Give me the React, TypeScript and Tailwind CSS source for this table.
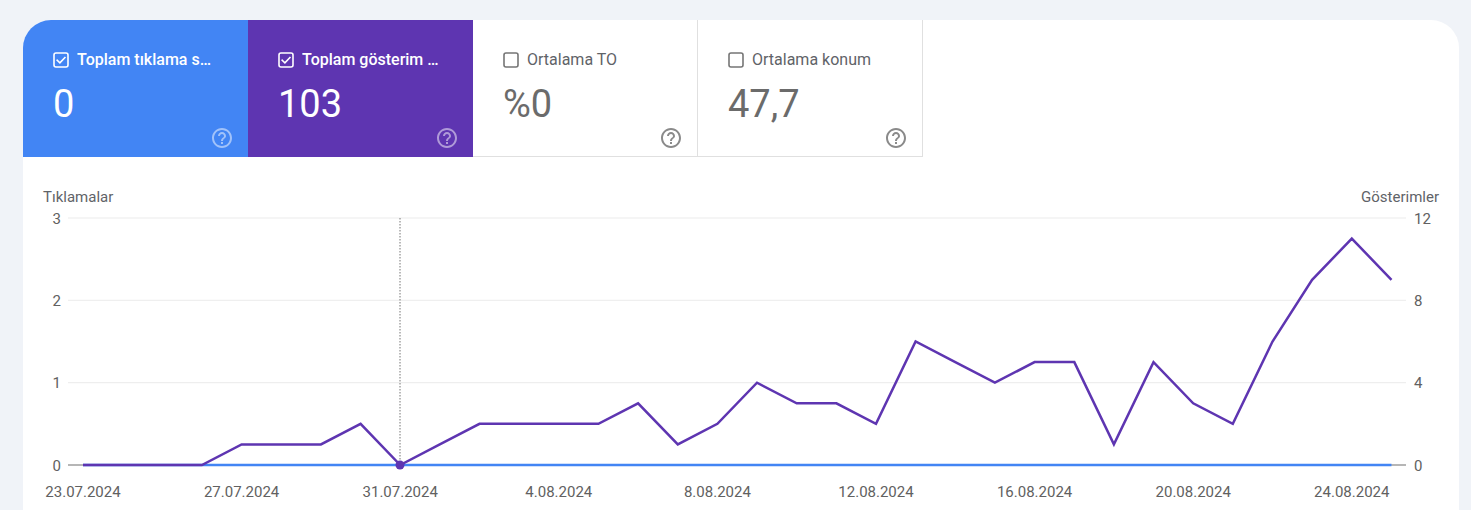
import React from "react";

const BLUE = "#4285f4";
const PURPLE = "#5e35b1";

function CheckIcon({ checked, color }: { checked: boolean; color: string }) {
  return (
    <svg width="16" height="16" viewBox="0 0 16 16" className="shrink-0">
      <rect x="1" y="1" width="14" height="14" rx="2" fill="none" stroke={color} strokeWidth="1.6" />
      {checked && (
        <path d="M4.2 8.2 L6.9 10.9 L11.9 5.6" fill="none" stroke={color} strokeWidth="1.6" strokeLinecap="square" />
      )}
    </svg>
  );
}

function HelpIcon({ color }: { color: string }) {
  return (
    <svg width="24" height="24" viewBox="0 0 24 24">
      <path
        fill={color}
        d="M11 18h2v-2h-2v2zm1-16C6.48 2 2 6.48 2 12s4.48 10 10 10 10-4.48 10-10S17.52 2 12 2zm0 18c-4.41 0-8-3.59-8-8s3.59-8 8-8 8 3.59 8 8-3.59 8-8 8zm0-14c-2.21 0-4 1.790-4 4h2c0-1.1.9-2 2-2s2 .9 2 2c0 2-3 1.75-3 5h2c0-2.25 3-2.5 3-5 0-2.21-1.79-4-4-4z"
      />
    </svg>
  );
}

type CardProps = {
  label: string;
  value: string;
  selected: boolean;
  bg?: string;
};

function MetricCard({ label, value, selected, bg }: CardProps) {
  if (selected) {
    return (
      <div
        className={
          "w-[225px] h-[137px] flex flex-col pt-[30px] pl-[30px] pr-[14px] pb-[13px] text-white " +
          (bg === "blue" ? "bg-[#4285f4]" : "bg-[#5e35b1]")
        }
      >
        <div className="flex items-center gap-[8px] h-[20px] pr-[20px] min-w-0">
          <CheckIcon checked color="#ffffff" />
          <span className="text-[16px] font-medium leading-[20px] truncate min-w-0">{label}</span>
        </div>
        <div className="mt-[12px] text-[38px] leading-[44px]">{value}</div>
        <div className="mt-auto self-end">
          <HelpIcon color="rgba(255,255,255,0.5)" />
        </div>
      </div>
    );
  }
  return (
    <div className="w-[225px] h-[137px] flex flex-col pt-[30px] pl-[30px] pr-[14px] pb-[12px] border-r border-b border-[#e0e0e0] text-[#5f6368]">
      <div className="flex items-center gap-[8px] h-[20px] pr-[20px] min-w-0">
        <CheckIcon checked={false} color="#757575" />
        <span className="text-[16px] leading-[20px] truncate min-w-0">{label}</span>
      </div>
      <div className="mt-[12px] text-[38px] leading-[44px] text-[#6b6b6b]">{value}</div>
      <div className="mt-auto self-end">
        <HelpIcon color="#8a8a8a" />
      </div>
    </div>
  );
}

const impressions = [
  0, 0, 0, 0, 1, 1, 1, 2, 0, 1, 2, 2, 2, 2, 3, 1, 2, 4, 3, 3, 2, 6, 5, 4, 5, 5, 1, 5, 3, 2, 6, 9, 11, 9,
];

const X0 = 83;
const DX = 39.65;
const Y0 = 465;
const unitImp = (465 - 218) / 12;

const dates = [
  "23.07.2024",
  "27.07.2024",
  "31.07.2024",
  "4.08.2024",
  "8.08.2024",
  "12.08.2024",
  "16.08.2024",
  "20.08.2024",
  "24.08.2024",
];

function Chart() {
  const pts = impressions.map((v, i) => `${(X0 + i * DX).toFixed(1)},${(Y0 - v * unitImp).toFixed(1)}`).join(" ");
  const xEnd = X0 + (impressions.length - 1) * DX;
  const grid = [218, 300.3, 382.7];
  const leftTicks = ["3", "2", "1", "0"];
  const rightTicks = ["12", "8", "4", "0"];
  const tickYs = [218, 300.3, 382.7, 465];
  const font = { fontFamily: "Roboto, 'Liberation Sans', sans-serif" };
  return (
    <svg width="1436" height="353" viewBox="23 157 1436 353" className="block" style={font}>
      <text x="43" y="202" fontSize="15" fill="#5f6368">
        Tıklamalar
      </text>
      <text x="1439" y="202" fontSize="15" fill="#5f6368" textAnchor="end">
        Gösterimler
      </text>
      {grid.map((y) => (
        <line key={y} x1="68" x2="1406" y1={y} y2={y} stroke="#ebebeb" strokeWidth="1" />
      ))}
      {tickYs.map((y, i) => (
        <text key={"l" + i} x="61" y={y + 5.5} fontSize="15" fill="#616161" textAnchor="end">
          {leftTicks[i]}
        </text>
      ))}
      {tickYs.map((y, i) => (
        <text key={"r" + i} x="1414" y={y + 5.5} fontSize="15" fill="#616161">
          {rightTicks[i]}
        </text>
      ))}
      <line x1="68" x2="1406" y1="465" y2="465" stroke="#9e9e9e" strokeWidth="1.5" />
      <line x1="400" x2="400" y1="218" y2="465" stroke="#757575" strokeWidth="1" strokeDasharray="1.5 1.5" />
      <line x1={X0} x2={xEnd} y1="465" y2="465" stroke={BLUE} strokeWidth="2.6" />
      <polyline points={pts} fill="none" stroke={PURPLE} strokeWidth="2.5" strokeLinejoin="miter" />
      <circle cx="400" cy="465" r="4.5" fill={PURPLE} />
      {dates.map((d, i) => (
        <text key={d} x={X0 + i * 4 * DX} y="497" fontSize="15" fill="#616161" textAnchor="middle">
          {d}
        </text>
      ))}
    </svg>
  );
}

export default function App() {
  return (
    <div className="min-h-screen w-full bg-[#f0f3f8] pt-[20px] pl-[23px] pr-[12px] overflow-hidden" style={{ fontFamily: "Roboto, 'Liberation Sans', sans-serif" }}>
      <div className="bg-white rounded-t-[28px] overflow-hidden h-[490px]">
        <div className="flex">
          <MetricCard label="Toplam tıklama sayısı" value="0" selected bg="blue" />
          <MetricCard label="Toplam gösterim sayısı" value="103" selected bg="purple" />
          <MetricCard label="Ortalama TO" value="%0" selected={false} />
          <MetricCard label="Ortalama konum" value="47,7" selected={false} />
        </div>
        <Chart />
      </div>
    </div>
  );
}
